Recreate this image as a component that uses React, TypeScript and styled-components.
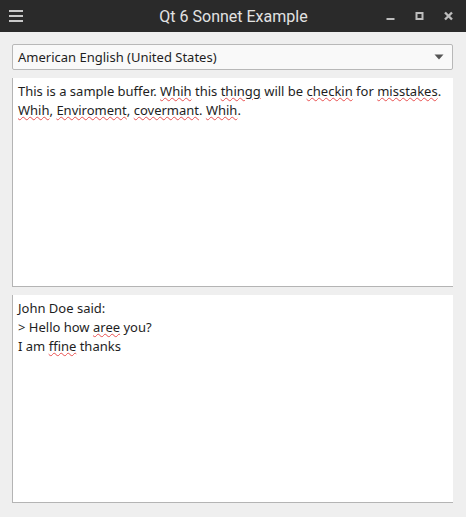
import React from 'react';
import styled, { createGlobalStyle } from 'styled-components';

const GlobalStyle = createGlobalStyle`
  html, body {
    margin: 0;
    padding: 0;
    background: #efefef;
  }
  body {
    font-family: "Noto Sans", "DejaVu Sans", sans-serif;
  }
`;

const Window = styled.div`
  width: 466px;
  height: 517px;
  display: flex;
  flex-direction: column;
  background: #efefef;
`;

const TitleBar = styled.div`
  height: 32px;
  flex: none;
  background: #2a2a2a;
  display: flex;
  align-items: center;
  padding: 0 13px 0 9px;
  color: #e4e4e4;
`;

const Title = styled.div`
  flex: 1;
  text-align: center;
  font-family: Roboto, "Noto Sans", sans-serif;
  font-size: 16px;
  font-weight: 400;
  color: #e2e2e2;
  padding-left: 58px;
`;

const TitleButtons = styled.div`
  display: flex;
  align-items: center;
  gap: 20px;
`;

const Content = styled.div`
  flex: 1;
  display: flex;
  flex-direction: column;
  gap: 8px;
  padding: 12px 13px 14px 12px;
  min-height: 0;
`;

const Combo = styled.div`
  height: 26px;
  flex: none;
  box-sizing: border-box;
  border: 1px solid #b8b8b8;
  border-radius: 2px;
  background: #f9f9f9;
  display: flex;
  align-items: center;
  padding: 0 8px 0 5px;
  font-size: 13px;
  color: #1e1e1e;
`;

const ComboLabel = styled.span`
  flex: 1;
`;

const Edit = styled.div`
  flex: 1;
  box-sizing: border-box;
  background: #fff;
  border-left: 1px solid #b4b4b4;
  border-bottom: 1px solid #b4b4b4;
  padding: 4px 6px 4px 5px;
  font-size: 13px;
  line-height: 19px;
  color: #1e1e1e;
`;

const Line = styled.div``;

const Misspelled = styled.span`
  text-decoration: underline wavy #e85050;
  text-decoration-thickness: 1px;
  text-underline-offset: 1px;
`;

const Hamburger = () => (
  <svg width="14" height="14" viewBox="0 0 14 14">
    <rect x="0" y="1" width="14" height="2" fill="#c8c8c8" />
    <rect x="0" y="6" width="14" height="2" fill="#c8c8c8" />
    <rect x="0" y="11" width="14" height="2" fill="#c8c8c8" />
  </svg>
);

const MinIcon = () => (
  <svg width="9" height="10" viewBox="0 0 9 10">
    <rect x="0.5" y="7" width="8" height="2" fill="#bdbdbd" />
  </svg>
);

const MaxIcon = () => (
  <svg width="9" height="10" viewBox="0 0 9 10">
    <rect x="1.5" y="2" width="6" height="6" fill="none" stroke="#bdbdbd" strokeWidth="2" />
  </svg>
);

const CloseIcon = () => (
  <svg width="9" height="10" viewBox="0 0 9 10">
    <path d="M1 1.5 L8 8.5 M8 1.5 L1 8.5" stroke="#bdbdbd" strokeWidth="2.4" />
  </svg>
);

const Arrow = () => (
  <svg width="10" height="6" viewBox="0 0 10 6">
    <path d="M0.5 0.5 L9.5 0.5 L5 5.5 Z" fill="#555" />
  </svg>
);

export default function App() {
  return (
    <Window>
      <GlobalStyle />
      <TitleBar>
        <Hamburger />
        <Title>Qt 6 Sonnet Example</Title>
        <TitleButtons>
          <MinIcon />
          <MaxIcon />
          <CloseIcon />
        </TitleButtons>
      </TitleBar>
      <Content>
        <Combo>
          <ComboLabel>American English (United States)</ComboLabel>
          <Arrow />
        </Combo>
        <Edit>
          <Line>
            This is a sample buffer. <Misspelled>Whih</Misspelled> this{' '}
            <Misspelled>thingg</Misspelled> will be <Misspelled>checkin</Misspelled> for{' '}
            <Misspelled>misstakes</Misspelled>. <Misspelled>Whih</Misspelled>,{' '}
            <Misspelled>Enviroment</Misspelled>, <Misspelled>covermant</Misspelled>.{' '}
            <Misspelled>Whih</Misspelled>.
          </Line>
        </Edit>
        <Edit>
          <Line>John Doe said:</Line>
          <Line>
            &gt; Hello how <Misspelled>aree</Misspelled> you?
          </Line>
          <Line>
            I am <Misspelled>ffine</Misspelled> thanks
          </Line>
        </Edit>
      </Content>
    </Window>
  );
}
